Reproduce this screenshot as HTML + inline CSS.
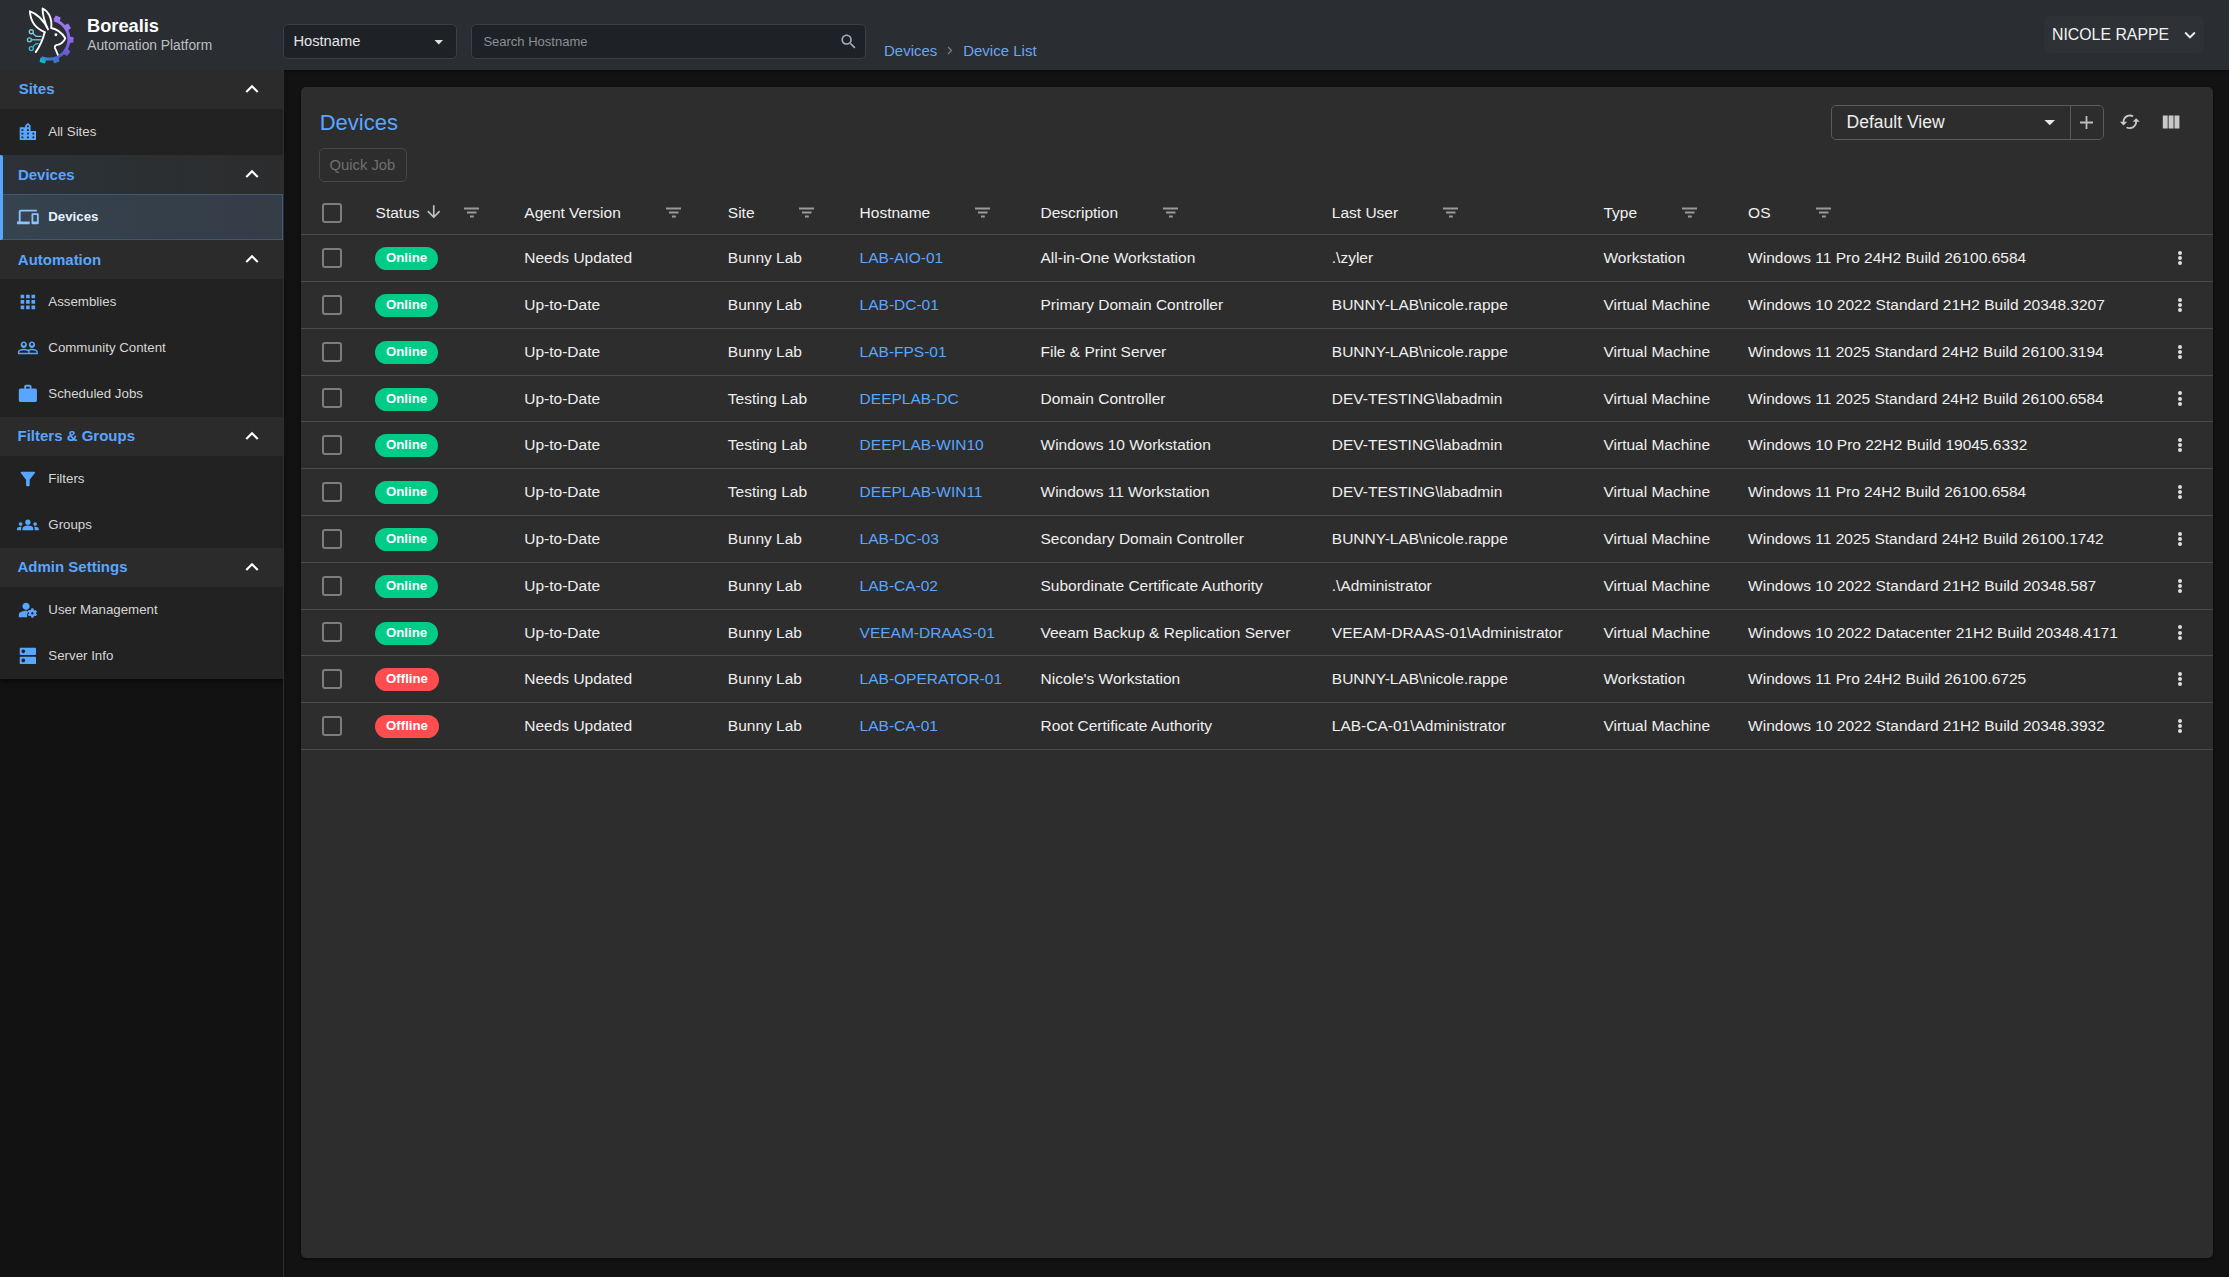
<!DOCTYPE html><html><head><meta charset="utf-8"><title>Devices</title><style>
*{box-sizing:border-box;margin:0;padding:0}
html,body{width:2229px;height:1277px;overflow:hidden;background:#121212;font-family:"Liberation Sans",sans-serif;}
.a{position:absolute;white-space:nowrap}
.t{position:absolute;white-space:nowrap;line-height:1}
#hdr{position:absolute;left:0;top:0;width:2229px;height:70px;background:#2a2d32;box-shadow:0 1px 3px rgba(0,0,0,0.6)}
.box{position:absolute;background:#1e2125;border:1px solid #3b3f45;border-radius:5px}
#side{position:absolute;left:0;top:70px;width:283px;height:609px}
#sideline{position:absolute;left:283px;top:70px;width:1px;height:1207px;background:#2e2e2e}
.sh{position:absolute;left:0;width:283px;height:39px;background:#2b2b2b}
.si{position:absolute;left:0;width:283px;height:46px;background:#222222}
.sht{position:absolute;left:18px;font-weight:bold;font-size:15px;color:#58a6ff;line-height:1}
.sit{position:absolute;left:48px;font-size:13.3px;color:#d9d9d9;line-height:1}
.chev{position:absolute;left:245px;width:14px;height:9px}
.ico{position:absolute;left:17px;width:21.75px;height:21.75px}
#panel{position:absolute;left:301px;top:87px;width:1912px;height:1171px;background:#2d2d2d;border-radius:5px;box-shadow:0 1px 3px rgba(0,0,0,0.5)}
.cell{position:absolute;font-size:15.5px;color:#efefef;line-height:1;white-space:nowrap}
.hl{position:absolute;left:0;width:1912px;height:1px;background:#4a4a4a}
.cb{position:absolute;width:20px;height:20px;border:2px solid #7d7d7d;border-radius:3px}
.pill{position:absolute;height:23px;border-radius:12px;color:#fff;font-weight:bold;font-size:13.2px;line-height:22.6px;text-align:center}
.flt{position:absolute;width:15px;height:11px}
.kb{position:absolute;width:4px;height:16px}
</style></head><body><div id="hdr"></div>
<svg class="a" style="left:24px;top:4px" width="56" height="60" viewBox="0 0 56 60">
<defs><linearGradient id="gg" gradientUnits="userSpaceOnUse" x1="38" y1="14" x2="16" y2="57">
<stop offset="0" stop-color="#a07ef0"/><stop offset="0.45" stop-color="#7d5fe2"/><stop offset="0.72" stop-color="#5a58d2"/><stop offset="0.86" stop-color="#3a78cc"/><stop offset="1" stop-color="#0fbccc"/></linearGradient></defs>
<g fill="url(#gg)"><path d="M30.54,14.53 A21.4,21.4 0 1 1 16.98,55.04 L18.11,52.26 A18.4,18.4 0 1 0 29.76,17.43 Z"/><polygon points="35.51,17.99 36.69,13.50 31.67,11.47 29.39,15.51"/><polygon points="43.46,27.06 46.98,24.05 44.02,19.52 39.84,21.54"/><polygon points="44.80,39.05 49.41,38.59 49.57,33.18 44.98,32.46"/><polygon points="39.06,49.67 43.11,51.92 46.33,47.56 42.98,44.35"/><polygon points="28.29,55.10 30.33,59.26 35.46,57.52 34.54,52.97"/><polygon points="16.34,53.42 15.65,58.01 20.85,59.50 22.69,55.24"/></g>
<g fill="none" stroke="#ffffff" stroke-width="1.9" stroke-linejoin="round" stroke-linecap="round">
<path d="M20.7,28.2 C19.5,33 17.5,40 11.7,48.1"/>
<path d="M20.7,28.2 C13,25 6.5,18 5.9,7.3 C12,9 20,16 24,25.4 C21,19 18.5,11 18.6,4.5 C24,7 28.5,14 27.2,24 C33,25 38,29 41.3,34.3 C40,38 36,41 32.9,40.9 C30,41.5 30.5,44 31.9,46 L33.8,50.7"/>
</g>
<circle cx="31.9" cy="30.8" r="1.45" fill="#fff"/>
<g fill="none" stroke-width="1.35">
<path stroke="#7fd0ea" d="M9.0,29.5 L12.2,32.4 L17.4,32.4"/><circle stroke="#7fd0ea" cx="7.3" cy="27.7" r="2.0"/>
<path stroke="#72c4de" d="M7.4,35.8 L16.9,35.8"/><circle stroke="#72c4de" cx="5.4" cy="35.8" r="2.0"/>
<path stroke="#2bc3d8" d="M8.9,42.9 L11.7,39.8 L14.6,39.6"/><circle stroke="#2bc3d8" cx="7.3" cy="44.6" r="2.0"/>
</g>
</svg>
<div class="t" style="left:87.00px;top:17.15px;font-size:18.25px;color:#ffffff;font-weight:bold;">Borealis</div>
<div class="t" style="left:87.20px;top:38.92px;font-size:13.8px;color:#bdbfc2;">Automation Platform</div>
<div class="box" style="left:283px;top:24px;width:174px;height:35px"></div>
<div class="t" style="left:293.40px;top:33.56px;font-size:14.7px;color:#e4e5e7;">Hostname</div>
<svg class="a" style="left:434px;top:40px" width="10" height="5" viewBox="0 0 10 5"><path d="M0.5 0 L9 0 L4.75 4.5z" fill="#e0e0e0"/></svg>
<div class="box" style="left:471px;top:24px;width:395px;height:35px"></div>
<div class="t" style="left:483.40px;top:35.00px;font-size:13px;color:#8b8f94;">Search Hostname</div>
<svg class="a" style="left:839.00px;top:32.10px;" width="19.3" height="19.3" viewBox="0 0 24 24"><path fill="#a3abb3" d="M15.5 14h-.79l-.28-.27C15.41 12.59 16 11.11 16 9.5 16 5.91 13.09 3 9.5 3S3 5.91 3 9.5 5.91 16 9.5 16c1.61 0 3.09-.59 4.23-1.57l.27.28v.79l5 4.99L20.49 19l-4.99-5zm-6 0C7.01 14 5 11.99 5 9.5S7.01 5 9.5 5 14 7.01 14 9.5 11.99 14 9.5 14z"/></svg>
<div class="t" style="left:884.00px;top:42.90px;font-size:15px;color:#6aa6f0;">Devices</div>
<svg class="a" style="left:946px;top:46px" width="8" height="9" viewBox="0 0 8 9"><path d="M2 1 L5.5 4.5 L2 8" fill="none" stroke="#7a7d82" stroke-width="1.3"/></svg>
<div class="t" style="left:963.20px;top:42.90px;font-size:15px;color:#6aa6f0;">Device List</div>
<div class="a" style="left:2044px;top:16px;width:160px;height:37px;background:#2e3136;border-radius:6px"></div>
<div class="t" style="left:2052.00px;top:26.88px;font-size:15.85px;color:#f2f2f2;">NICOLE RAPPE</div>
<svg class="a" style="left:2177.70px;top:22.60px;transform:scale(0.92);transform-origin:12px 12px" width="24" height="24" viewBox="0 0 24 24"><path fill="#f0f0f0" d="M16.59 8.59L12 13.17 7.41 8.59 6 10l6 6 6-6z"/></svg>
<div class="a" style="left:0;top:70px;width:283px;height:609px;background:#222;box-shadow:0 4px 4px -1px rgba(0,0,0,0.5)"></div>
<div id="sideline"></div>
<div class="sh" style="top:70px;"></div>
<div class="t" style="left:18.70px;top:81.30px;font-size:15px;color:#58a6ff;font-weight:bold;">Sites</div>
<svg class="a" style="left:239.20px;top:75.80px;" width="26" height="26" viewBox="0 0 24 24"><path fill="#ffffff" d="M12 8l-6 6 1.41 1.41L12 10.83l4.59 4.58L18 14z"/></svg>
<div class="si" style="top:109px"></div>
<div class="t" style="left:48.30px;top:124.74px;font-size:13.3px;color:#d6d6d6;">All Sites</div>
<svg class="a" style="left:17.00px;top:121.10px;" width="21.75" height="21.75" viewBox="0 0 24 24"><path fill="#58a6ff" d="M15 11V5l-3-3-3 3v2H3v14h18V11h-6zm-8 8H5v-2h2v2zm0-4H5v-2h2v2zm0-4H5V9h2v2zm6 8h-2v-2h2v2zm0-4h-2v-2h2v2zm0-4h-2V9h2v2zm0-4h-2V5h2v2zm6 12h-2v-2h2v2zm0-4h-2v-2h2v2z"/></svg>
<div class="sh" style="top:155px;background:linear-gradient(90deg,#2c3338 0%,#2b2f32 50%,#2c2c2d 100%)"></div>
<div class="t" style="left:17.90px;top:167.30px;font-size:15px;color:#58a6ff;font-weight:bold;">Devices</div>
<svg class="a" style="left:239.20px;top:160.80px;" width="26" height="26" viewBox="0 0 24 24"><path fill="#ffffff" d="M12 8l-6 6 1.41 1.41L12 10.83l4.59 4.58L18 14z"/></svg>
<div class="si" style="top:194px;background:linear-gradient(90deg,#36444f 0%,#343f4a 50%,#353d47 100%);border:1px solid #3e5878;border-left:none"></div>
<div class="t" style="left:48.20px;top:209.74px;font-size:13.3px;color:#e8f1ff;font-weight:bold;">Devices</div>
<svg class="a" style="left:17.00px;top:206.10px;" width="21.75" height="21.75" viewBox="0 0 24 24"><path fill="#8cc2ff" d="M4 6h18V4H4c-1.1 0-2 .9-2 2v11H0v3h14v-3H4V6zm19 2h-6c-.55 0-1 .45-1 1v10c0 .55.45 1 1 1h6c.55 0 1-.45 1-1V9c0-.55-.45-1-1-1zm-1 9h-4v-7h4v7z"/></svg>
<div class="sh" style="top:240px;"></div>
<div class="t" style="left:17.80px;top:252.30px;font-size:15px;color:#58a6ff;font-weight:bold;">Automation</div>
<svg class="a" style="left:239.20px;top:245.80px;" width="26" height="26" viewBox="0 0 24 24"><path fill="#ffffff" d="M12 8l-6 6 1.41 1.41L12 10.83l4.59 4.58L18 14z"/></svg>
<div class="si" style="top:279px"></div>
<div class="t" style="left:48.30px;top:294.74px;font-size:13.3px;color:#d6d6d6;">Assemblies</div>
<svg class="a" style="left:17.00px;top:291.10px;" width="21.75" height="21.75" viewBox="0 0 24 24"><path fill="#58a6ff" d="M4 8h4V4H4v4zm6 12h4v-4h-4v4zm-6 0h4v-4H4v4zm0-6h4v-4H4v4zm6 0h4v-4h-4v4zm6-10v4h4V4h-4zm-6 4h4V4h-4v4zm6 6h4v-4h-4v4zm0 6h4v-4h-4v4z"/></svg>
<div class="si" style="top:325px"></div>
<div class="t" style="left:48.30px;top:340.74px;font-size:13.3px;color:#d6d6d6;">Community Content</div>
<svg class="a" style="left:17.00px;top:337.10px;" width="21.75" height="21.75" viewBox="0 0 24 24"><path fill="#58a6ff" d="M16.5 13c-1.2 0-3.07.34-4.5 1-1.43-.67-3.3-1-4.5-1C5.33 13 1 14.08 1 16.25V19h22v-2.75c0-2.17-4.33-3.25-6.5-3.25zm-4 4.5h-10v-1.25c0-.54 2.56-1.75 5-1.75s5 1.21 5 1.75v1.25zm9 0H14v-1.25c0-.46-.2-.86-.52-1.22.88-.3 1.96-.53 3.02-.53 2.44 0 5 1.21 5 1.75v1.25zM7.5 12c1.93 0 3.5-1.57 3.5-3.5S9.43 5 7.5 5 4 6.57 4 8.5 5.57 12 7.5 12zm0-5.5c.83 0 1.5.67 1.5 1.5s-.67 1.5-1.5 1.5S6 8.83 6 8s.67-1.5 1.5-1.5zm9 5.5c1.93 0 3.5-1.57 3.5-3.5S18.43 5 16.5 5 13 6.57 13 8.5s1.57 3.5 3.5 3.5zm0-5.5c.83 0 1.5.67 1.5 1.5s-.67 1.5-1.5 1.5S15 8.83 15 8s.67-1.5 1.5-1.5z"/></svg>
<div class="si" style="top:371px"></div>
<div class="t" style="left:48.30px;top:386.74px;font-size:13.3px;color:#d6d6d6;">Scheduled Jobs</div>
<svg class="a" style="left:17.00px;top:383.10px;" width="21.75" height="21.75" viewBox="0 0 24 24"><path fill="#58a6ff" d="M20 6h-4V4c0-1.11-.89-2-2-2h-4c-1.11 0-2 .89-2 2v2H4c-1.11 0-1.99.89-1.99 2L2 19c0 1.11.89 2 2 2h16c1.11 0 2-.89 2-2V8c0-1.11-.89-2-2-2zm-6 0h-4V4h4v2z"/></svg>
<div class="sh" style="top:417px;"></div>
<div class="t" style="left:17.50px;top:428.40px;font-size:15px;color:#58a6ff;font-weight:bold;">Filters & Groups</div>
<svg class="a" style="left:239.20px;top:422.80px;" width="26" height="26" viewBox="0 0 24 24"><path fill="#ffffff" d="M12 8l-6 6 1.41 1.41L12 10.83l4.59 4.58L18 14z"/></svg>
<div class="si" style="top:456px"></div>
<div class="t" style="left:48.30px;top:471.74px;font-size:13.3px;color:#d6d6d6;">Filters</div>
<svg class="a" style="left:17.00px;top:468.10px;" width="21.75" height="21.75" viewBox="0 0 24 24"><path fill="#58a6ff" d="M4.25 5.61C6.27 8.2 10 13 10 13v6c0 .55.45 1 1 1h2c.55 0 1-.45 1-1v-6s3.72-4.8 5.74-7.39c.51-.66.04-1.61-.79-1.61H5.04c-.83 0-1.3.95-.79 1.61z"/></svg>
<div class="si" style="top:502px"></div>
<div class="t" style="left:48.30px;top:517.74px;font-size:13.3px;color:#d6d6d6;">Groups</div>
<svg class="a" style="left:17.00px;top:514.10px;" width="21.75" height="21.75" viewBox="0 0 24 24"><path fill="#58a6ff" d="M12 12.75c1.63 0 3.07.39 4.24.9 1.08.48 1.76 1.56 1.76 2.73V18H6v-1.61c0-1.18.68-2.26 1.76-2.73 1.17-.52 2.61-.91 4.24-.91zM4 13c1.1 0 2-.9 2-2s-.9-2-2-2-2 .9-2 2 .9 2 2 2zm1.13 1.1c-.37-.06-.74-.1-1.13-.1-.99 0-1.93.21-2.78.58C.48 14.9 0 15.62 0 16.43V18h4.5v-1.61c0-.83.23-1.61.63-2.29zM20 13c1.1 0 2-.9 2-2s-.9-2-2-2-2 .9-2 2 .9 2 2 2zm4 3.43c0-.81-.48-1.53-1.22-1.85-.85-.37-1.79-.58-2.78-.58-.39 0-.76.04-1.13.1.4.68.63 1.46.63 2.29V18H24v-1.57zM12 6c1.66 0 3 1.34 3 3s-1.34 3-3 3-3-1.34-3-3 1.34-3 3-3z"/></svg>
<div class="sh" style="top:548px;"></div>
<div class="t" style="left:17.50px;top:559.40px;font-size:15px;color:#58a6ff;font-weight:bold;">Admin Settings</div>
<svg class="a" style="left:239.20px;top:553.80px;" width="26" height="26" viewBox="0 0 24 24"><path fill="#ffffff" d="M12 8l-6 6 1.41 1.41L12 10.83l4.59 4.58L18 14z"/></svg>
<div class="si" style="top:587px"></div>
<div class="t" style="left:48.30px;top:602.74px;font-size:13.3px;color:#d6d6d6;">User Management</div>
<svg class="a" style="left:17.00px;top:599.10px" width="21.75" height="21.75" viewBox="0 0 24 24"><path fill="#58a6ff" d="M10 12c2.21 0 4-1.79 4-4s-1.79-4-4-4-4 1.79-4 4 1.79 4 4 4zm0 1c-2.67 0-8 1.34-8 4v3h9.26c-.17-.49-.26-.99-.26-1.5 0-1.66.81-3.13 2.05-4.04C11.76 13.16 10.63 13 10 13z"/><path fill="#58a6ff" stroke="#222222" stroke-width="1.1" style="paint-order:stroke" transform="translate(-1,-2.6)" d="M21.75 18.5c0-.22-.03-.42-.06-.63l1.14-1.01-1-1.73-1.45.49c-.32-.27-.68-.48-1.08-.63L19 13h-2l-.3 1.49c-.4.15-.76.36-1.08.63l-1.45-.49-1 1.73 1.14 1.01c-.03.21-.06.41-.06.63s.03.42.06.63l-1.14 1.01 1 1.73 1.45-.49c.32.27.68.48 1.08.63L17 23h2l.3-1.49c.4-.15.76-.36 1.08-.63l1.45.49 1-1.73-1.14-1.01c.03-.21.06-.41.06-.63zM18 20c-.83 0-1.5-.67-1.5-1.5S17.17 17 18 17s1.5.67 1.5 1.5S18.83 20 18 20z"/><path fill="#58a6ff" transform="translate(-1,-2.6)" d="M21.75 18.5c0-.22-.03-.42-.06-.63l1.14-1.01-1-1.73-1.45.49c-.32-.27-.68-.48-1.08-.63L19 13h-2l-.3 1.49c-.4.15-.76.36-1.08.63l-1.45-.49-1 1.73 1.14 1.01c-.03.21-.06.41-.06.63s.03.42.06.63l-1.14 1.01 1 1.73 1.45-.49c.32.27.68.48 1.08.63L17 23h2l.3-1.49c.4-.15.76-.36 1.08-.63l1.45.49 1-1.73-1.14-1.01c.03-.21.06-.41.06-.63zM18 20c-.83 0-1.5-.67-1.5-1.5S17.17 17 18 17s1.5.67 1.5 1.5S18.83 20 18 20z"/></svg>
<div class="si" style="top:633px"></div>
<div class="t" style="left:48.30px;top:648.74px;font-size:13.3px;color:#d6d6d6;">Server Info</div>
<svg class="a" style="left:17.00px;top:645.10px;" width="21.75" height="21.75" viewBox="0 0 24 24"><path fill="#58a6ff" d="M20 13H4c-.55 0-1 .45-1 1v6c0 .55.45 1 1 1h16c.55 0 1-.45 1-1v-6c0-.55-.45-1-1-1zM7 19c-1.1 0-2-.9-2-2s.9-2 2-2 2 .9 2 2-.9 2-2 2zM20 3H4c-.55 0-1 .45-1 1v6c0 .55.45 1 1 1h16c.55 0 1-.45 1-1V4c0-.55-.45-1-1-1zM7 9c-1.1 0-2-.9-2-2s.9-2 2-2 2 .9 2 2-.9 2-2 2z"/></svg>
<div class="a" style="left:0;top:155px;width:3px;height:85px;background:#58a6ff;border-radius:0 2px 2px 0"></div>
<div id="panel"></div>
<div class="t" style="left:319.70px;top:112.38px;font-size:22px;color:#58a6ff;">Devices</div>
<div class="a" style="left:319px;top:148px;width:88px;height:34px;border:1px solid #474747;border-radius:5px"></div>
<div class="t" style="left:329.60px;top:157.51px;font-size:14.75px;color:#707070;">Quick Job</div>
<div class="a" style="left:1831px;top:105px;width:273px;height:35px;border:1px solid #5a5a5a;border-radius:5px"></div>
<div class="a" style="left:2070px;top:106px;width:1px;height:33px;background:#5a5a5a"></div>
<div class="t" style="left:1846.50px;top:113.74px;font-size:17.55px;color:#eeeeee;">Default View</div>
<svg class="a" style="left:2044px;top:120px" width="12" height="6" viewBox="0 0 12 6"><path d="M0.5 0 L11 0 L5.75 5.3z" fill="#eaeaea"/></svg>
<svg class="a" style="left:2079px;top:115px" width="15" height="15" viewBox="0 0 15 15"><path d="M7.5 1 V14 M1 7.5 H14" stroke="#bdbdbd" stroke-width="1.8"/></svg>
<svg class="a" style="left:2119.00px;top:110.90px;" width="21.7" height="21.7" viewBox="0 0 24 24"><path fill="#c8c8c8" d="M19 8l-4 4h3c0 3.31-2.69 6-6 6-1.01 0-1.97-.25-2.8-.7l-1.46 1.46C8.97 19.54 10.43 20 12 20c4.42 0 8-3.58 8-8h3l-4-4zM6 12c0-3.31 2.69-6 6-6 1.01 0 1.97.25 2.8.7l1.46-1.46C15.03 4.46 13.57 4 12 4c-4.42 0-8 3.58-8 8H1l4 4 4-4H6z"/></svg>
<svg class="a" style="left:2159.80px;top:110.60px;" width="22.2" height="22.2" viewBox="0 0 24 24"><path fill="#c8c8c8" d="M14.67 5v14H9.33V5h5.34zm1 14H21V5h-5.33v14zm-7.34 0V5H3v14h5.33z"/></svg>
<div class="cb" style="left:322px;top:203px"></div>
<div class="t" style="left:375.60px;top:204.88px;font-size:15.5px;color:#f0f0f0">Status</div>
<svg class="a" style="left:464.1px;top:206.8px" width="15" height="11" viewBox="0 0 15 11"><path d="M0 0.5h15v2H0z M3 4.5h9.5v2H3z M6 8.5h3.8v2H6z" fill="#9a9a9a"/></svg>
<div class="t" style="left:524.30px;top:204.88px;font-size:15.5px;color:#f0f0f0">Agent Version</div>
<svg class="a" style="left:666.3px;top:206.8px" width="15" height="11" viewBox="0 0 15 11"><path d="M0 0.5h15v2H0z M3 4.5h9.5v2H3z M6 8.5h3.8v2H6z" fill="#9a9a9a"/></svg>
<div class="t" style="left:727.80px;top:204.88px;font-size:15.5px;color:#f0f0f0">Site</div>
<svg class="a" style="left:799.4px;top:206.8px" width="15" height="11" viewBox="0 0 15 11"><path d="M0 0.5h15v2H0z M3 4.5h9.5v2H3z M6 8.5h3.8v2H6z" fill="#9a9a9a"/></svg>
<div class="t" style="left:859.60px;top:204.88px;font-size:15.5px;color:#f0f0f0">Hostname</div>
<svg class="a" style="left:975.4px;top:206.8px" width="15" height="11" viewBox="0 0 15 11"><path d="M0 0.5h15v2H0z M3 4.5h9.5v2H3z M6 8.5h3.8v2H6z" fill="#9a9a9a"/></svg>
<div class="t" style="left:1040.50px;top:204.88px;font-size:15.5px;color:#f0f0f0">Description</div>
<svg class="a" style="left:1162.9px;top:206.8px" width="15" height="11" viewBox="0 0 15 11"><path d="M0 0.5h15v2H0z M3 4.5h9.5v2H3z M6 8.5h3.8v2H6z" fill="#9a9a9a"/></svg>
<div class="t" style="left:1331.80px;top:204.88px;font-size:15.5px;color:#f0f0f0">Last User</div>
<svg class="a" style="left:1443.0px;top:206.8px" width="15" height="11" viewBox="0 0 15 11"><path d="M0 0.5h15v2H0z M3 4.5h9.5v2H3z M6 8.5h3.8v2H6z" fill="#9a9a9a"/></svg>
<div class="t" style="left:1603.50px;top:204.88px;font-size:15.5px;color:#f0f0f0">Type</div>
<svg class="a" style="left:1682.2px;top:206.8px" width="15" height="11" viewBox="0 0 15 11"><path d="M0 0.5h15v2H0z M3 4.5h9.5v2H3z M6 8.5h3.8v2H6z" fill="#9a9a9a"/></svg>
<div class="t" style="left:1748.10px;top:204.88px;font-size:15.5px;color:#f0f0f0">OS</div>
<svg class="a" style="left:1815.6px;top:206.8px" width="15" height="11" viewBox="0 0 15 11"><path d="M0 0.5h15v2H0z M3 4.5h9.5v2H3z M6 8.5h3.8v2H6z" fill="#9a9a9a"/></svg>
<svg class="a" style="left:424.06px;top:201.66px;" width="19.5" height="19.5" viewBox="0 0 24 24"><path fill="#c4c4c4" d="M20 12l-1.41-1.41L13 16.17V4h-2v12.17l-5.58-5.59L4 12l8 8 8-8z"/></svg>
<div class="a" style="left:301px;top:234px;width:1912px;height:1px;background:#4b4b4b"></div>
<div class="a" style="left:301px;top:281px;width:1912px;height:1px;background:#4b4b4b"></div>
<div class="a" style="left:301px;top:328px;width:1912px;height:1px;background:#4b4b4b"></div>
<div class="a" style="left:301px;top:375px;width:1912px;height:1px;background:#4b4b4b"></div>
<div class="a" style="left:301px;top:421px;width:1912px;height:1px;background:#4b4b4b"></div>
<div class="a" style="left:301px;top:468px;width:1912px;height:1px;background:#4b4b4b"></div>
<div class="a" style="left:301px;top:515px;width:1912px;height:1px;background:#4b4b4b"></div>
<div class="a" style="left:301px;top:562px;width:1912px;height:1px;background:#4b4b4b"></div>
<div class="a" style="left:301px;top:609px;width:1912px;height:1px;background:#4b4b4b"></div>
<div class="a" style="left:301px;top:655px;width:1912px;height:1px;background:#4b4b4b"></div>
<div class="a" style="left:301px;top:702px;width:1912px;height:1px;background:#4b4b4b"></div>
<div class="a" style="left:301px;top:749px;width:1912px;height:1px;background:#4b4b4b"></div>
<div class="cb" style="left:322px;top:248px"></div>
<div class="pill" style="left:375px;top:247.0px;width:63px;background:#00cc88">Online</div>
<div class="t" style="left:524.30px;top:250.38px;font-size:15.5px;color:#efefef">Needs Updated</div>
<div class="t" style="left:727.80px;top:250.38px;font-size:15.5px;color:#efefef">Bunny Lab</div>
<div class="t" style="left:859.60px;top:250.38px;font-size:15.5px;color:#58a6ff">LAB-AIO-01</div>
<div class="t" style="left:1040.50px;top:250.38px;font-size:15.5px;color:#efefef">All-in-One Workstation</div>
<div class="t" style="left:1331.80px;top:250.38px;font-size:15.5px;color:#efefef">.\zyler</div>
<div class="t" style="left:1603.50px;top:250.38px;font-size:15.5px;color:#efefef">Workstation</div>
<div class="t" style="left:1748.10px;top:250.38px;font-size:15.5px;color:#efefef">Windows 11 Pro 24H2 Build 26100.6584</div>
<div class="a" style="left:2177.7px;top:250.6px;width:4px;height:4px;border-radius:50%;background:#dedede"></div>
<div class="a" style="left:2177.7px;top:256.0px;width:4px;height:4px;border-radius:50%;background:#dedede"></div>
<div class="a" style="left:2177.7px;top:261.4px;width:4px;height:4px;border-radius:50%;background:#dedede"></div>
<div class="cb" style="left:322px;top:295px"></div>
<div class="pill" style="left:375px;top:294.0px;width:63px;background:#00cc88">Online</div>
<div class="t" style="left:524.30px;top:297.38px;font-size:15.5px;color:#efefef">Up-to-Date</div>
<div class="t" style="left:727.80px;top:297.38px;font-size:15.5px;color:#efefef">Bunny Lab</div>
<div class="t" style="left:859.60px;top:297.38px;font-size:15.5px;color:#58a6ff">LAB-DC-01</div>
<div class="t" style="left:1040.50px;top:297.38px;font-size:15.5px;color:#efefef">Primary Domain Controller</div>
<div class="t" style="left:1331.80px;top:297.38px;font-size:15.5px;color:#efefef">BUNNY-LAB\nicole.rappe</div>
<div class="t" style="left:1603.50px;top:297.38px;font-size:15.5px;color:#efefef">Virtual Machine</div>
<div class="t" style="left:1748.10px;top:297.38px;font-size:15.5px;color:#efefef">Windows 10 2022 Standard 21H2 Build 20348.3207</div>
<div class="a" style="left:2177.7px;top:297.6px;width:4px;height:4px;border-radius:50%;background:#dedede"></div>
<div class="a" style="left:2177.7px;top:303.0px;width:4px;height:4px;border-radius:50%;background:#dedede"></div>
<div class="a" style="left:2177.7px;top:308.4px;width:4px;height:4px;border-radius:50%;background:#dedede"></div>
<div class="cb" style="left:322px;top:342px"></div>
<div class="pill" style="left:375px;top:341.0px;width:63px;background:#00cc88">Online</div>
<div class="t" style="left:524.30px;top:344.38px;font-size:15.5px;color:#efefef">Up-to-Date</div>
<div class="t" style="left:727.80px;top:344.38px;font-size:15.5px;color:#efefef">Bunny Lab</div>
<div class="t" style="left:859.60px;top:344.38px;font-size:15.5px;color:#58a6ff">LAB-FPS-01</div>
<div class="t" style="left:1040.50px;top:344.38px;font-size:15.5px;color:#efefef">File &amp; Print Server</div>
<div class="t" style="left:1331.80px;top:344.38px;font-size:15.5px;color:#efefef">BUNNY-LAB\nicole.rappe</div>
<div class="t" style="left:1603.50px;top:344.38px;font-size:15.5px;color:#efefef">Virtual Machine</div>
<div class="t" style="left:1748.10px;top:344.38px;font-size:15.5px;color:#efefef">Windows 11 2025 Standard 24H2 Build 26100.3194</div>
<div class="a" style="left:2177.7px;top:344.6px;width:4px;height:4px;border-radius:50%;background:#dedede"></div>
<div class="a" style="left:2177.7px;top:350.0px;width:4px;height:4px;border-radius:50%;background:#dedede"></div>
<div class="a" style="left:2177.7px;top:355.4px;width:4px;height:4px;border-radius:50%;background:#dedede"></div>
<div class="cb" style="left:322px;top:388px"></div>
<div class="pill" style="left:375px;top:387.5px;width:63px;background:#00cc88">Online</div>
<div class="t" style="left:524.30px;top:390.88px;font-size:15.5px;color:#efefef">Up-to-Date</div>
<div class="t" style="left:727.80px;top:390.88px;font-size:15.5px;color:#efefef">Testing Lab</div>
<div class="t" style="left:859.60px;top:390.88px;font-size:15.5px;color:#58a6ff">DEEPLAB-DC</div>
<div class="t" style="left:1040.50px;top:390.88px;font-size:15.5px;color:#efefef">Domain Controller</div>
<div class="t" style="left:1331.80px;top:390.88px;font-size:15.5px;color:#efefef">DEV-TESTING\labadmin</div>
<div class="t" style="left:1603.50px;top:390.88px;font-size:15.5px;color:#efefef">Virtual Machine</div>
<div class="t" style="left:1748.10px;top:390.88px;font-size:15.5px;color:#efefef">Windows 11 2025 Standard 24H2 Build 26100.6584</div>
<div class="a" style="left:2177.7px;top:391.1px;width:4px;height:4px;border-radius:50%;background:#dedede"></div>
<div class="a" style="left:2177.7px;top:396.5px;width:4px;height:4px;border-radius:50%;background:#dedede"></div>
<div class="a" style="left:2177.7px;top:401.9px;width:4px;height:4px;border-radius:50%;background:#dedede"></div>
<div class="cb" style="left:322px;top:435px"></div>
<div class="pill" style="left:375px;top:434.0px;width:63px;background:#00cc88">Online</div>
<div class="t" style="left:524.30px;top:437.38px;font-size:15.5px;color:#efefef">Up-to-Date</div>
<div class="t" style="left:727.80px;top:437.38px;font-size:15.5px;color:#efefef">Testing Lab</div>
<div class="t" style="left:859.60px;top:437.38px;font-size:15.5px;color:#58a6ff">DEEPLAB-WIN10</div>
<div class="t" style="left:1040.50px;top:437.38px;font-size:15.5px;color:#efefef">Windows 10 Workstation</div>
<div class="t" style="left:1331.80px;top:437.38px;font-size:15.5px;color:#efefef">DEV-TESTING\labadmin</div>
<div class="t" style="left:1603.50px;top:437.38px;font-size:15.5px;color:#efefef">Virtual Machine</div>
<div class="t" style="left:1748.10px;top:437.38px;font-size:15.5px;color:#efefef">Windows 10 Pro 22H2 Build 19045.6332</div>
<div class="a" style="left:2177.7px;top:437.6px;width:4px;height:4px;border-radius:50%;background:#dedede"></div>
<div class="a" style="left:2177.7px;top:443.0px;width:4px;height:4px;border-radius:50%;background:#dedede"></div>
<div class="a" style="left:2177.7px;top:448.4px;width:4px;height:4px;border-radius:50%;background:#dedede"></div>
<div class="cb" style="left:322px;top:482px"></div>
<div class="pill" style="left:375px;top:481.0px;width:63px;background:#00cc88">Online</div>
<div class="t" style="left:524.30px;top:484.38px;font-size:15.5px;color:#efefef">Up-to-Date</div>
<div class="t" style="left:727.80px;top:484.38px;font-size:15.5px;color:#efefef">Testing Lab</div>
<div class="t" style="left:859.60px;top:484.38px;font-size:15.5px;color:#58a6ff">DEEPLAB-WIN11</div>
<div class="t" style="left:1040.50px;top:484.38px;font-size:15.5px;color:#efefef">Windows 11 Workstation</div>
<div class="t" style="left:1331.80px;top:484.38px;font-size:15.5px;color:#efefef">DEV-TESTING\labadmin</div>
<div class="t" style="left:1603.50px;top:484.38px;font-size:15.5px;color:#efefef">Virtual Machine</div>
<div class="t" style="left:1748.10px;top:484.38px;font-size:15.5px;color:#efefef">Windows 11 Pro 24H2 Build 26100.6584</div>
<div class="a" style="left:2177.7px;top:484.6px;width:4px;height:4px;border-radius:50%;background:#dedede"></div>
<div class="a" style="left:2177.7px;top:490.0px;width:4px;height:4px;border-radius:50%;background:#dedede"></div>
<div class="a" style="left:2177.7px;top:495.4px;width:4px;height:4px;border-radius:50%;background:#dedede"></div>
<div class="cb" style="left:322px;top:529px"></div>
<div class="pill" style="left:375px;top:528.0px;width:63px;background:#00cc88">Online</div>
<div class="t" style="left:524.30px;top:531.38px;font-size:15.5px;color:#efefef">Up-to-Date</div>
<div class="t" style="left:727.80px;top:531.38px;font-size:15.5px;color:#efefef">Bunny Lab</div>
<div class="t" style="left:859.60px;top:531.38px;font-size:15.5px;color:#58a6ff">LAB-DC-03</div>
<div class="t" style="left:1040.50px;top:531.38px;font-size:15.5px;color:#efefef">Secondary Domain Controller</div>
<div class="t" style="left:1331.80px;top:531.38px;font-size:15.5px;color:#efefef">BUNNY-LAB\nicole.rappe</div>
<div class="t" style="left:1603.50px;top:531.38px;font-size:15.5px;color:#efefef">Virtual Machine</div>
<div class="t" style="left:1748.10px;top:531.38px;font-size:15.5px;color:#efefef">Windows 11 2025 Standard 24H2 Build 26100.1742</div>
<div class="a" style="left:2177.7px;top:531.6px;width:4px;height:4px;border-radius:50%;background:#dedede"></div>
<div class="a" style="left:2177.7px;top:537.0px;width:4px;height:4px;border-radius:50%;background:#dedede"></div>
<div class="a" style="left:2177.7px;top:542.4px;width:4px;height:4px;border-radius:50%;background:#dedede"></div>
<div class="cb" style="left:322px;top:576px"></div>
<div class="pill" style="left:375px;top:575.0px;width:63px;background:#00cc88">Online</div>
<div class="t" style="left:524.30px;top:578.38px;font-size:15.5px;color:#efefef">Up-to-Date</div>
<div class="t" style="left:727.80px;top:578.38px;font-size:15.5px;color:#efefef">Bunny Lab</div>
<div class="t" style="left:859.60px;top:578.38px;font-size:15.5px;color:#58a6ff">LAB-CA-02</div>
<div class="t" style="left:1040.50px;top:578.38px;font-size:15.5px;color:#efefef">Subordinate Certificate Authority</div>
<div class="t" style="left:1331.80px;top:578.38px;font-size:15.5px;color:#efefef">.\Administrator</div>
<div class="t" style="left:1603.50px;top:578.38px;font-size:15.5px;color:#efefef">Virtual Machine</div>
<div class="t" style="left:1748.10px;top:578.38px;font-size:15.5px;color:#efefef">Windows 10 2022 Standard 21H2 Build 20348.587</div>
<div class="a" style="left:2177.7px;top:578.6px;width:4px;height:4px;border-radius:50%;background:#dedede"></div>
<div class="a" style="left:2177.7px;top:584.0px;width:4px;height:4px;border-radius:50%;background:#dedede"></div>
<div class="a" style="left:2177.7px;top:589.4px;width:4px;height:4px;border-radius:50%;background:#dedede"></div>
<div class="cb" style="left:322px;top:622px"></div>
<div class="pill" style="left:375px;top:621.5px;width:63px;background:#00cc88">Online</div>
<div class="t" style="left:524.30px;top:624.88px;font-size:15.5px;color:#efefef">Up-to-Date</div>
<div class="t" style="left:727.80px;top:624.88px;font-size:15.5px;color:#efefef">Bunny Lab</div>
<div class="t" style="left:859.60px;top:624.88px;font-size:15.5px;color:#58a6ff">VEEAM-DRAAS-01</div>
<div class="t" style="left:1040.50px;top:624.88px;font-size:15.5px;color:#efefef">Veeam Backup &amp; Replication Server</div>
<div class="t" style="left:1331.80px;top:624.88px;font-size:15.5px;color:#efefef">VEEAM-DRAAS-01\Administrator</div>
<div class="t" style="left:1603.50px;top:624.88px;font-size:15.5px;color:#efefef">Virtual Machine</div>
<div class="t" style="left:1748.10px;top:624.88px;font-size:15.5px;color:#efefef">Windows 10 2022 Datacenter 21H2 Build 20348.4171</div>
<div class="a" style="left:2177.7px;top:625.1px;width:4px;height:4px;border-radius:50%;background:#dedede"></div>
<div class="a" style="left:2177.7px;top:630.5px;width:4px;height:4px;border-radius:50%;background:#dedede"></div>
<div class="a" style="left:2177.7px;top:635.9px;width:4px;height:4px;border-radius:50%;background:#dedede"></div>
<div class="cb" style="left:322px;top:669px"></div>
<div class="pill" style="left:375px;top:668.0px;width:64px;background:#ff4d4f">Offline</div>
<div class="t" style="left:524.30px;top:671.38px;font-size:15.5px;color:#efefef">Needs Updated</div>
<div class="t" style="left:727.80px;top:671.38px;font-size:15.5px;color:#efefef">Bunny Lab</div>
<div class="t" style="left:859.60px;top:671.38px;font-size:15.5px;color:#58a6ff">LAB-OPERATOR-01</div>
<div class="t" style="left:1040.50px;top:671.38px;font-size:15.5px;color:#efefef">Nicole's Workstation</div>
<div class="t" style="left:1331.80px;top:671.38px;font-size:15.5px;color:#efefef">BUNNY-LAB\nicole.rappe</div>
<div class="t" style="left:1603.50px;top:671.38px;font-size:15.5px;color:#efefef">Workstation</div>
<div class="t" style="left:1748.10px;top:671.38px;font-size:15.5px;color:#efefef">Windows 11 Pro 24H2 Build 26100.6725</div>
<div class="a" style="left:2177.7px;top:671.6px;width:4px;height:4px;border-radius:50%;background:#dedede"></div>
<div class="a" style="left:2177.7px;top:677.0px;width:4px;height:4px;border-radius:50%;background:#dedede"></div>
<div class="a" style="left:2177.7px;top:682.4px;width:4px;height:4px;border-radius:50%;background:#dedede"></div>
<div class="cb" style="left:322px;top:716px"></div>
<div class="pill" style="left:375px;top:715.0px;width:64px;background:#ff4d4f">Offline</div>
<div class="t" style="left:524.30px;top:718.38px;font-size:15.5px;color:#efefef">Needs Updated</div>
<div class="t" style="left:727.80px;top:718.38px;font-size:15.5px;color:#efefef">Bunny Lab</div>
<div class="t" style="left:859.60px;top:718.38px;font-size:15.5px;color:#58a6ff">LAB-CA-01</div>
<div class="t" style="left:1040.50px;top:718.38px;font-size:15.5px;color:#efefef">Root Certificate Authority</div>
<div class="t" style="left:1331.80px;top:718.38px;font-size:15.5px;color:#efefef">LAB-CA-01\Administrator</div>
<div class="t" style="left:1603.50px;top:718.38px;font-size:15.5px;color:#efefef">Virtual Machine</div>
<div class="t" style="left:1748.10px;top:718.38px;font-size:15.5px;color:#efefef">Windows 10 2022 Standard 21H2 Build 20348.3932</div>
<div class="a" style="left:2177.7px;top:718.6px;width:4px;height:4px;border-radius:50%;background:#dedede"></div>
<div class="a" style="left:2177.7px;top:724.0px;width:4px;height:4px;border-radius:50%;background:#dedede"></div>
<div class="a" style="left:2177.7px;top:729.4px;width:4px;height:4px;border-radius:50%;background:#dedede"></div></body></html>
